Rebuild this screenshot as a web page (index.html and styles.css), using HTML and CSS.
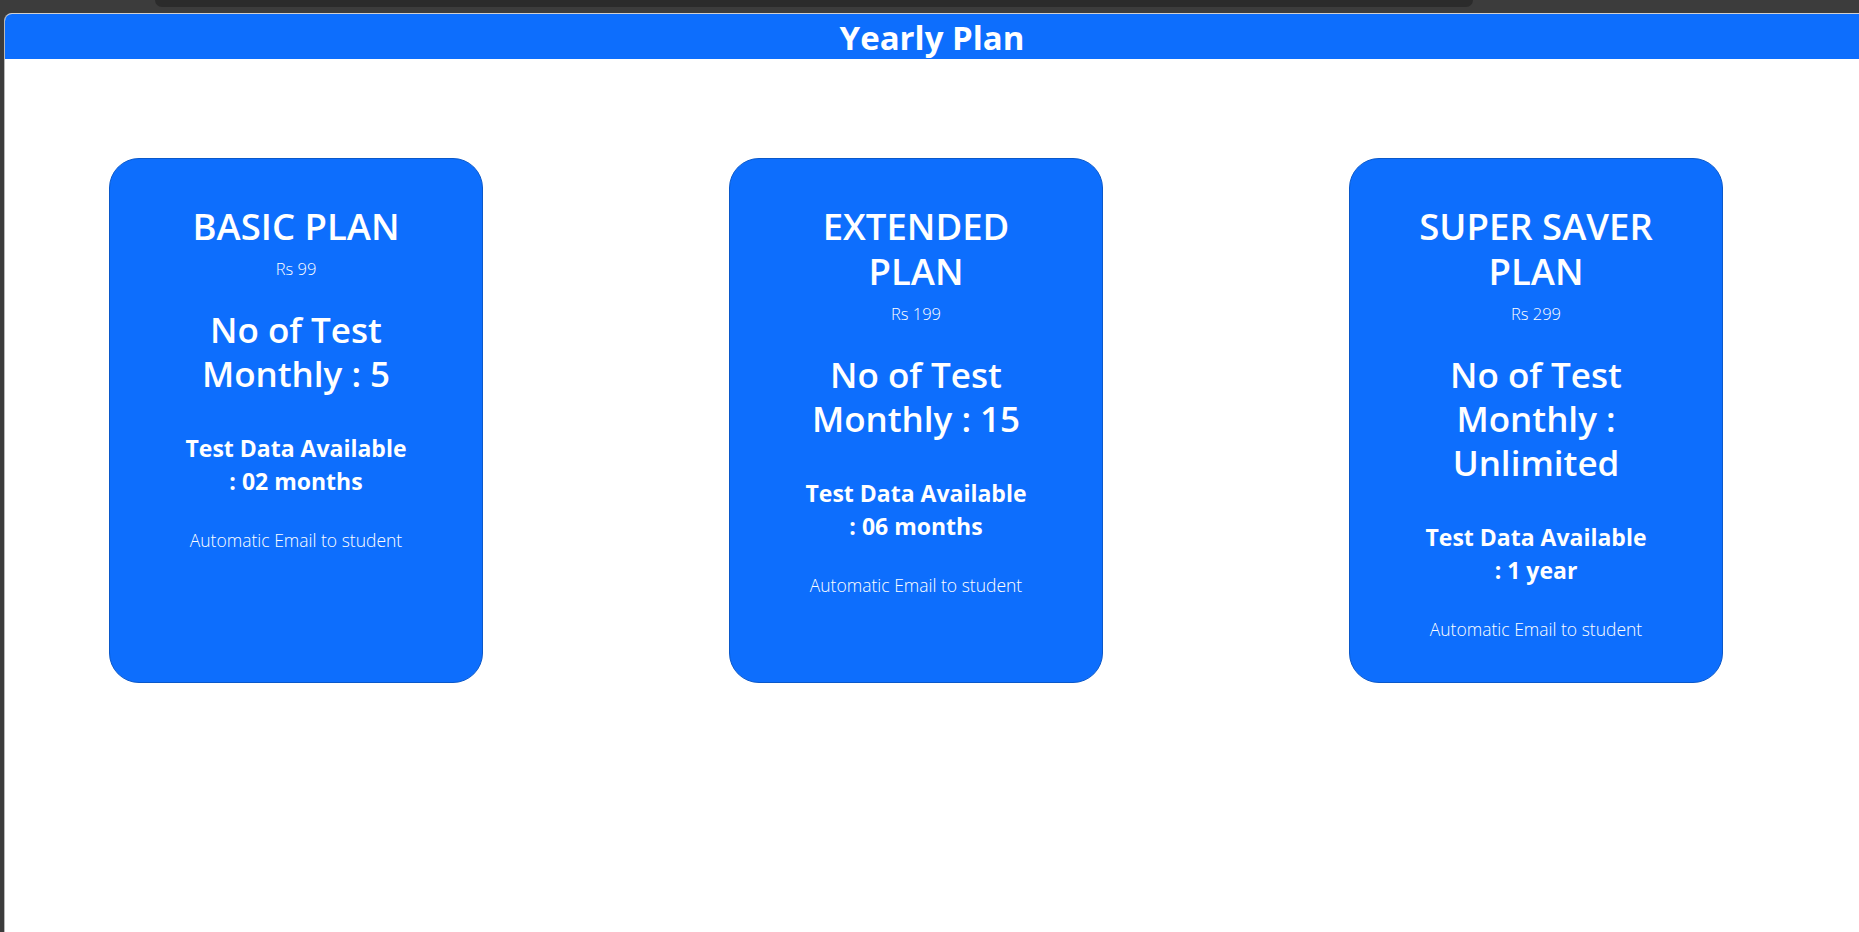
FILE: index.html
```html
<!DOCTYPE html>
<html lang="en">
<head>
<meta charset="utf-8">
<title>Yearly Plan</title>
<link rel="stylesheet" href="styles.css">
</head>
<body>
<div class="frame-top"><div class="frame-pill"></div></div>
<div class="window">
  <h1 class="page-title">Yearly Plan</h1>
  <div class="plans">
    <div class="plan-card">
      <h2 class="plan-name">BASIC PLAN</h2>
      <p class="plan-price">Rs 99</p>
      <h3 class="plan-tests">No of Test<br>Monthly : 5</h3>
      <h4 class="plan-data">Test Data Available<br>: 02 months</h4>
      <p class="plan-email">Automatic Email to student</p>
    </div>
    <div class="plan-card">
      <h2 class="plan-name">EXTENDED<br>PLAN</h2>
      <p class="plan-price">Rs 199</p>
      <h3 class="plan-tests">No of Test<br>Monthly : 15</h3>
      <h4 class="plan-data">Test Data Available<br>: 06 months</h4>
      <p class="plan-email">Automatic Email to student</p>
    </div>
    <div class="plan-card">
      <h2 class="plan-name">SUPER SAVER<br>PLAN</h2>
      <p class="plan-price">Rs 299</p>
      <h3 class="plan-tests">No of Test<br>Monthly :<br>Unlimited</h3>
      <h4 class="plan-data">Test Data Available<br>: 1 year</h4>
      <p class="plan-email">Automatic Email to student</p>
    </div>
  </div>
</div>
</body>
</html>
```
FILE: styles.css
```css
html, body {
  margin: 0;
  padding: 0;
  height: 100%;
}
body {
  background: #3c3c3c;
  font-family: "Open Sans", "Noto Sans", sans-serif;
  overflow: hidden;
}
.frame-top {
  height: 13px;
  padding-left: 155px;
  box-sizing: border-box;
}
.frame-pill {
  width: 1318px;
  height: 7px;
  background: #2b2b2b;
  border-radius: 0 0 9px 9px;
}
.window {
  margin-left: 4px;
  height: calc(100% - 13px);
  background: #ffffff;
  border-top: 1px solid #d0d0d0;
  border-left: 1px solid #b8b8b8;
  border-top-left-radius: 8px;
  overflow: hidden;
  box-sizing: border-box;
}
.page-title {
  margin: 0;
  height: 45px;
  box-sizing: border-box;
  padding-top: 3px;
  line-height: 42px;
  background: #0d6efd;
  color: #ffffff;
  text-align: center;
  font-size: 33px;
  font-weight: 700;
}
.plans {
  display: flex;
  gap: 246px;
  padding-left: 104px;
  margin-top: 99px;
}
.plan-card {
  width: 374px;
  height: 525px;
  box-sizing: border-box;
  background: #0d6efd;
  border: 1px solid #0a58ca;
  border-radius: 30px;
  padding-top: 45px;
  color: #ffffff;
  text-align: center;
}
.plan-name {
  margin: 0;
  font-size: 36.5px;
  line-height: 45px;
  font-weight: 600;
}
.plan-price {
  margin: 7px 0 0;
  font-size: 16.5px;
  line-height: 26px;
  font-weight: 300;
}
.plan-tests {
  margin: 25.5px 0 0;
  font-size: 35px;
  line-height: 44px;
  font-weight: 600;
}
.plan-data {
  margin: 36px 0 0;
  font-size: 23px;
  line-height: 33px;
  font-weight: 700;
}
.plan-email {
  margin: 29.5px 0 0;
  font-size: 17.5px;
  line-height: 27px;
  font-weight: 300;
}
```
